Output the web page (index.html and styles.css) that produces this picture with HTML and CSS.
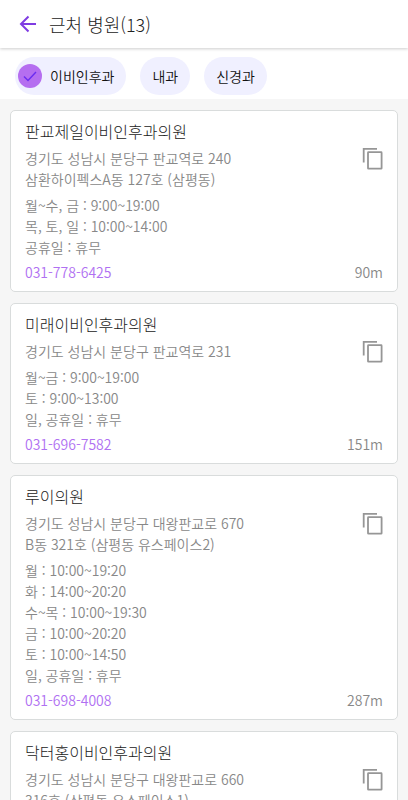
FILE: index.html
```html
<!DOCTYPE html>
<html lang="ko">
<head>
<meta charset="utf-8">
<meta name="viewport" content="width=device-width, initial-scale=1">
<title>근처 병원</title>
<link rel="stylesheet" href="styles.css">
</head>
<body>
<svg class="defs" aria-hidden="true">
  <symbol id="copy" viewBox="0 0 22 24"><path d="M2.700 14.500V0.900H16"/><rect x="7" y="4.200" width="13.600" height="16.500" rx="0.500"/></symbol>
</svg>
<header class="topbar">
  <button class="back" type="button" aria-label="뒤로">
    <svg viewBox="0 0 18 18"><path d="M17 9H2M9.500 1.500 2 9l7.500 7.500"/></svg>
  </button>
  <h1 class="heading">근처 병원(13)</h1>
</header>
<nav class="filters" aria-label="진료과">
  <button class="chip chip-on" type="button" aria-pressed="true">
    <svg class="tick" viewBox="0 0 24 24"><circle cx="12" cy="12" r="12"/><path d="M6 12.500l4 4 8-8.500"/></svg>이비인후과</button>
  <button class="chip" type="button" aria-pressed="false">내과</button>
  <button class="chip" type="button" aria-pressed="false">신경과</button>
</nav>
<main class="list">
  <article class="card">
    <h2 class="name">판교제일이비인후과의원</h2>
    <div class="place">
      <p>경기도 성남시 분당구 판교역로 240<br>삼환하이펙스A동 127호 (삼평동)</p>
      <button class="copy" type="button" aria-label="주소 복사"><svg><use href="#copy"/></svg></button>
    </div>
    <p class="hours">월~수, 금 : 9:00~19:00<br>목, 토, 일 : 10:00~14:00<br>공휴일 : 휴무</p>
    <div class="foot"><a class="phone" href="tel:031-778-6425">031-778-6425</a><span>90m</span></div>
  </article>
  <article class="card">
    <h2 class="name">미래이비인후과의원</h2>
    <div class="place">
      <p>경기도 성남시 분당구 판교역로 231</p>
      <button class="copy" type="button" aria-label="주소 복사"><svg><use href="#copy"/></svg></button>
    </div>
    <p class="hours">월~금 : 9:00~19:00<br>토 : 9:00~13:00<br>일, 공휴일 : 휴무</p>
    <div class="foot"><a class="phone" href="tel:031-696-7582">031-696-7582</a><span>151m</span></div>
  </article>
  <article class="card">
    <h2 class="name">루이의원</h2>
    <div class="place">
      <p>경기도 성남시 분당구 대왕판교로 670<br>B동 321호 (삼평동 유스페이스2)</p>
      <button class="copy" type="button" aria-label="주소 복사"><svg><use href="#copy"/></svg></button>
    </div>
    <p class="hours">월 : 10:00~19:20<br>화 : 14:00~20:20<br>수~목 : 10:00~19:30<br>금 : 10:00~20:20<br>토 : 10:00~14:50<br>일, 공휴일 : 휴무</p>
    <div class="foot"><a class="phone" href="tel:031-698-4008">031-698-4008</a><span>287m</span></div>
  </article>
  <article class="card">
    <h2 class="name">닥터홍이비인후과의원</h2>
    <div class="place">
      <p>경기도 성남시 분당구 대왕판교로 660<br>316호 (삼평동 유스페이스1)</p>
      <button class="copy" type="button" aria-label="주소 복사"><svg><use href="#copy"/></svg></button>
    </div>
  </article>
</main>
</body>
</html>
```
FILE: styles.css
```css
* { box-sizing: border-box; }
html { height: 100%; }
body {
  margin: 0;
  height: 100%;
  display: flex;
  flex-direction: column;
  overflow: hidden;
  background: #f6f6f6;
  color: #222;
  font-family: "Noto Sans CJK KR", sans-serif;
  font-weight: 350;
  font-size: 14px;
  line-height: 21px;
}
h1, h2, p { margin: 0; }
h1, h2 { font-weight: 300; }
button {
  margin: 0;
  padding: 0;
  border: 0;
  background: none;
  font: inherit;
  color: inherit;
}
svg { display: block; fill: none; }
.defs { position: absolute; width: 0; height: 0; }

.topbar {
  flex: none;
  display: flex;
  align-items: center;
  gap: 12px;
  height: 48px;
  padding: 0 19px;
  background: #fff;
  box-shadow: 0 1px 3px rgba(0, 0, 0, 0.2);
  z-index: 1;
}
.back svg { width: 18px; height: 18px; stroke: #7f3ce2; stroke-width: 2; }
.heading { font-size: 18px; line-height: 26px; }

.filters {
  flex: none;
  display: flex;
  gap: 14px;
  padding: 9px 15px 4px;
  background: #fff;
}
.chip {
  height: 38px;
  padding: 0 12px;
  border-radius: 19px;
  background: #f0f0ff;
  color: #111;
}
.chip-on {
  display: flex;
  align-items: center;
  gap: 8px;
  padding-left: 3px;
}
.tick { width: 24px; height: 24px; }
.tick circle { fill: #b56ef0; }
.tick path { stroke: #6a2cf0; stroke-width: 1.4; }

.list {
  flex: 1;
  min-height: 0;
  overflow: hidden;
  padding: 11px 10px;
}
.card {
  margin-bottom: 11px;
  padding: 9px 14px 8px;
  border: 1px solid #d9dcdc;
  border-radius: 5px;
  background: #fff;
  color: #888;
}
.name { color: #222; font-size: 16px; line-height: 23px; }
.place {
  display: flex;
  justify-content: space-between;
  align-items: flex-start;
  margin-top: 5px;
}
.copy { height: 21px; }
.copy svg { width: 22px; height: 24px; stroke: #969696; stroke-width: 1.8; }
.hours { margin-top: 5px; }
.foot { display: flex; justify-content: space-between; margin-top: 4px; }
.phone { color: #b070f2; text-decoration: none; }
```
